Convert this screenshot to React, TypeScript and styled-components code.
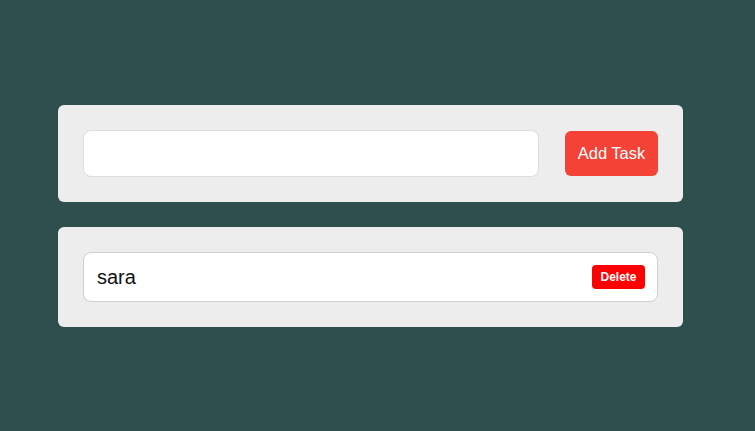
import React from "react";
import styled, { createGlobalStyle } from "styled-components";

const Global = createGlobalStyle`
  html, body { margin: 0; padding: 0; background: #2f4f4f; }
  body { font-family: "Liberation Sans", Arial, sans-serif; }
  * { box-sizing: border-box; }
`;

const Page = styled.div`
  padding: 105px 0 0 58px;
  display: flex;
  flex-direction: column;
  gap: 25px;
`;

const Card = styled.div`
  width: 625px;
  background: #ededed;
  border-radius: 6px;
  padding: 25px;
  display: flex;
  flex-direction: column;
`;

const Form = styled.div`
  display: flex;
  align-items: center;
  gap: 26px;
`;

const Input = styled.input`
  flex: 1;
  height: 47px;
  border: 1px solid #dcdcdc;
  border-radius: 8px;
  background: #fff;
  font-family: inherit;
  font-size: 16px;
  padding: 0 12px;
  outline: none;
`;

const AddButton = styled.button`
  height: 45px;
  width: 93px;
  border: none;
  border-radius: 6px;
  background: #f44336;
  color: #fff;
  font-family: inherit;
  font-size: 16.5px;
  padding: 0;
`;

const Item = styled.div`
  height: 50px;
  border: 1px solid #cfcfcf;
  border-radius: 8px;
  background: #fff;
  display: flex;
  align-items: center;
  justify-content: space-between;
  padding: 0 12px 0 13px;
`;

const ItemText = styled.span`
  font-size: 20px;
  color: #111;
`;

const DeleteButton = styled.button`
  height: 24px;
  border: none;
  border-radius: 4px;
  background: #ff0000;
  color: #fff;
  font-family: inherit;
  font-weight: bold;
  font-size: 12px;
  padding: 0 8.5px;
`;

export default function App() {
  return (
    <>
      <Global />
      <Page>
        <Card>
          <Form>
            <Input />
            <AddButton>Add Task</AddButton>
          </Form>
        </Card>
        <Card>
          <Item>
            <ItemText>sara</ItemText>
            <DeleteButton>Delete</DeleteButton>
          </Item>
        </Card>
      </Page>
    </>
  );
}
